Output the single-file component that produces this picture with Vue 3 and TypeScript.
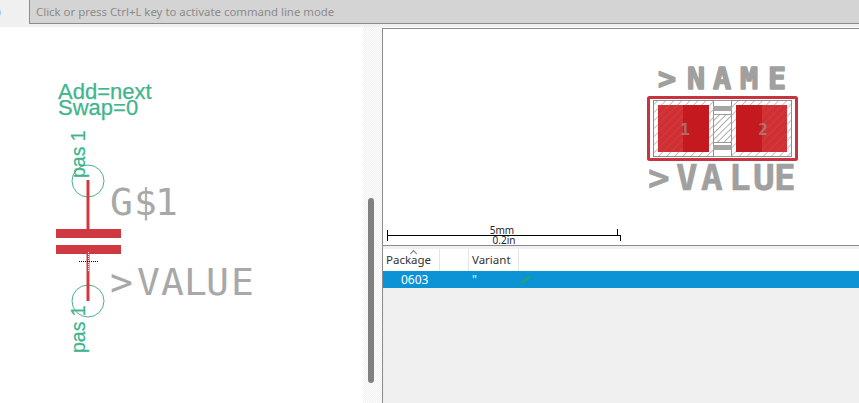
<template>
  <div class="app">
    <header class="cmdbar">
      <div class="cmd-stub">)</div>
      <div class="cmd-input">{{ hint }}</div>
    </header>
    <main class="body">
      <svg class="symbol" width="363" height="376" viewBox="0 27 363 376">
        <text class="attr" x="58" y="98.5">Add=next</text>
        <text class="attr" x="58" y="114.5">Swap=0</text>
        <text class="pin" transform="translate(85 178) rotate(-90)">pas 1</text>
        <text class="pin" transform="translate(85 353) rotate(-90)">pas 1</text>
        <circle class="pin-ring" cx="88" cy="181" r="16" />
        <circle class="pin-ring" cx="88" cy="301" r="16" />
        <rect class="wire" x="86.5" y="180" width="3" height="50" />
        <rect class="wire" x="86.5" y="253" width="3" height="48" />
        <rect class="wire" x="56" y="229" width="65" height="9" />
        <rect class="wire" x="56" y="245" width="65" height="9" />
        <line class="origin-h" x1="79" y1="261.5" x2="98" y2="261.5" />
        <line class="origin-v" x1="88.5" y1="252" x2="88.5" y2="272" />
        <text class="vec" x="110 134 155" y="215">G$1</text>
        <text class="vec" x="110 137 161 184 206 231" y="295">&gt;VALUE</text>
      </svg>

      <div class="splitter">
        <div class="thumb"></div>
      </div>

      <section class="side">
        <div class="preview">
          <svg width="476" height="216" viewBox="383 29 476 216">
            <defs>
              <pattern id="hatch" width="5.7" height="5.7" patternUnits="userSpaceOnUse" patternTransform="rotate(45)">
                <line x1="0" y1="0" x2="0" y2="5.7" stroke="#8e8e8e" stroke-width="1.1" />
              </pattern>
              <pattern id="hatch-dense" width="4.5" height="4.5" patternUnits="userSpaceOnUse" patternTransform="rotate(45)">
                <line x1="0" y1="0" x2="0" y2="4.5" stroke="#9a9a9a" stroke-width="1.6" />
              </pattern>
              <pattern id="hatch-pad" width="5.7" height="5.7" patternUnits="userSpaceOnUse" patternTransform="rotate(45)">
                <line x1="0" y1="0" x2="0" y2="5.7" stroke="#d94548" stroke-width="1" />
              </pattern>
            </defs>

            <text class="vec-bold name" x="658 687 713 740 768" y="89">&gt;NAME</text>
            <text class="vec-bold value" x="648 676 701 729 753 774" y="190">&gt;VALUE</text>

            <rect x="648.5" y="97.5" width="148" height="62" fill="#fff" stroke="#c8333f" stroke-width="3" rx="1" />
            <rect x="653.5" y="100.5" width="138" height="56" fill="none" stroke="#9a9a9a" />

            <rect x="653.5" y="100.5" width="60" height="56" fill="url(#hatch)" stroke="#8e8e8e" />
            <rect x="731.5" y="100.5" width="60" height="56" fill="url(#hatch)" stroke="#8e8e8e" />

            <rect x="713" y="106" width="19" height="5" fill="#a6a6a6" />
            <rect x="713" y="145" width="19" height="5" fill="#a6a6a6" />
            <rect x="713.5" y="114.5" width="18" height="28" fill="url(#hatch-dense)" stroke="#9a9a9a" />

            <rect x="658" y="105" width="25" height="47" fill="#cf3034" />
            <rect x="658" y="105" width="25" height="47" fill="url(#hatch-pad)" />
            <rect x="683" y="105" width="26" height="47" fill="#c4191e" />
            <rect x="736" y="105" width="26" height="47" fill="#c4191e" />
            <rect x="762" y="105" width="25" height="47" fill="#cf3034" />
            <rect x="762" y="105" width="25" height="47" fill="url(#hatch-pad)" />

            <text class="pad-no" x="685" y="135">1</text>
            <text class="pad-no" x="763" y="135">2</text>

            <path class="scale" d="M387.5 230V241M387.5 235.5H620.5M617.5 229V235M620.5 235V241" />
            <text class="scale-text" x="502" y="234">5mm</text>
            <text class="scale-text" x="504" y="244">0.2in</text>
          </svg>
        </div>

        <div class="table">
          <div class="thead">
            <div v-for="col in columns" :key="col.label" class="th" :style="{ width: col.width + 'px' }">
              <span v-if="col.sorted" class="caret"></span>
              {{ col.label }}
            </div>
          </div>
          <div class="row">
            <span class="cell-pkg">0603</span>
            <span class="cell-var">"</span>
            <svg class="check" width="14" height="10" viewBox="0 0 14 10">
              <path d="M2 8 L5 6 L11 2" fill="none" stroke="#1ea37a" stroke-width="3" />
            </svg>
          </div>
        </div>
      </section>
    </main>
  </div>
</template>

<script setup lang="ts">
const hint = 'Click or press Ctrl+L key to activate command line mode'

const columns = [
  { label: 'Package', width: 57, sorted: true },
  { label: '', width: 29, sorted: false },
  { label: 'Variant', width: 50, sorted: false },
]
</script>

<style>
html,
body {
  margin: 0;
  overflow: hidden;
}
</style>

<style scoped>
.app {
  width: 859px;
  height: 403px;
  display: flex;
  flex-direction: column;
  background: #fff;
  overflow: hidden;
  font-family: "Noto Sans", sans-serif;
}

.cmdbar {
  height: 27px;
  flex: none;
  display: flex;
  align-items: flex-start;
  background: #f0f0f0;
}

.cmd-stub {
  width: 29px;
  flex: none;
  margin-left: -3px;
  box-sizing: border-box;
  font-size: 12px;
  line-height: 24px;
  color: #333;
}

.cmd-input {
  flex: 1;
  margin-left: 3px;
  height: 24px;
  box-sizing: border-box;
  padding-left: 6px;
  background: #d4d4d4;
  border-left: 1px solid #8c8c8c;
  border-bottom: 1px solid #8c8c8c;
  font-family: "Noto Sans", sans-serif;
  font-size: 11.4px;
  line-height: 23px;
  color: #8b8b8b;
}

.body {
  flex: 1;
  display: flex;
  min-height: 0;
}

.symbol {
  flex: none;
  display: block;
}

.attr {
  font-family: "Liberation Sans", sans-serif;
  font-size: 22px;
  fill: #3eb58c;
  stroke: #3eb58c;
  stroke-width: 0.25;
}

.pin {
  font-family: "Liberation Sans", sans-serif;
  font-size: 19.5px;
  fill: #3eb58c;
  stroke: #3eb58c;
  stroke-width: 0.25;
}

.pin-ring {
  fill: none;
  stroke: #4fae90;
  stroke-width: 1;
}

.wire {
  fill: #cf3a42;
}

.origin-h,
.origin-v {
  stroke: #000;
  stroke-width: 1;
  stroke-dasharray: 1 1;
}

.origin-v {
  stroke: #fff;
}

.vec {
  font-family: "DejaVu Sans Mono", monospace;
  font-size: 38px;
  fill: #a8a8a8;
}

.vec-bold {
  font-family: "DejaVu Sans Mono", monospace;
  font-weight: bold;
  fill: #a0a0a0;
  stroke: #a0a0a0;
  stroke-linejoin: round;
}

.name {
  font-size: 30px;
  stroke-width: 1.5;
}

.value {
  font-size: 36px;
  stroke-width: 0.6;
}

.pad-no {
  font-family: "DejaVu Sans Mono", monospace;
  font-weight: bold;
  font-size: 16px;
  text-anchor: middle;
  fill: #a0a0a0;
  fill-opacity: 0.6;
}

.scale {
  fill: none;
  stroke: #000;
  stroke-width: 1;
}

.scale-text {
  font-family: "Noto Sans", sans-serif;
  font-size: 10px;
  text-anchor: middle;
  fill: #222;
}

.splitter {
  width: 19px;
  flex: none;
  box-sizing: border-box;
  padding: 171px 0 0 5px;
  background: repeating-conic-gradient(#f0f0f0 0 25%, #fff 0 50%) 0 0 / 2px 2px;
}

.thumb {
  width: 6px;
  height: 185px;
  border-radius: 3px;
  background: #808080;
}

.side {
  flex: 1;
  min-width: 0;
  display: flex;
  flex-direction: column;
  border-left: 1px solid #8c8c8c;
  margin-top: 1px;
  background: #f0f0f0;
}

.preview {
  height: 216px;
  flex: none;
  background: #fff;
  border-top: 1px solid #8c8c8c;
  border-bottom: 1px solid #8c8c8c;
}

.preview svg {
  display: block;
  overflow: visible;
}

.table {
  flex: 1;
  margin-top: 3px;
}

.thead {
  height: 22px;
  display: flex;
  background: #fff;
}

.th {
  position: relative;
  flex: none;
  box-sizing: border-box;
  padding-left: 3px;
  border-right: 1px solid #e4e4e4;
  font-size: 11.5px;
  line-height: 22px;
  color: #333;
}

.caret {
  position: absolute;
  left: 28px;
  top: 2px;
  width: 4px;
  height: 4px;
  border-left: 1px solid #777;
  border-top: 1px solid #777;
  transform: rotate(45deg);
}

.row {
  height: 17px;
  display: flex;
  align-items: center;
  background: #0c93d6;
  font-size: 12px;
  line-height: 17px;
  color: #fff;
}

.cell-pkg {
  margin-left: 18px;
  width: 71px;
}

.cell-var {
  width: 47px;
  color: #dff;
}

.check {
  display: block;
}
</style>
